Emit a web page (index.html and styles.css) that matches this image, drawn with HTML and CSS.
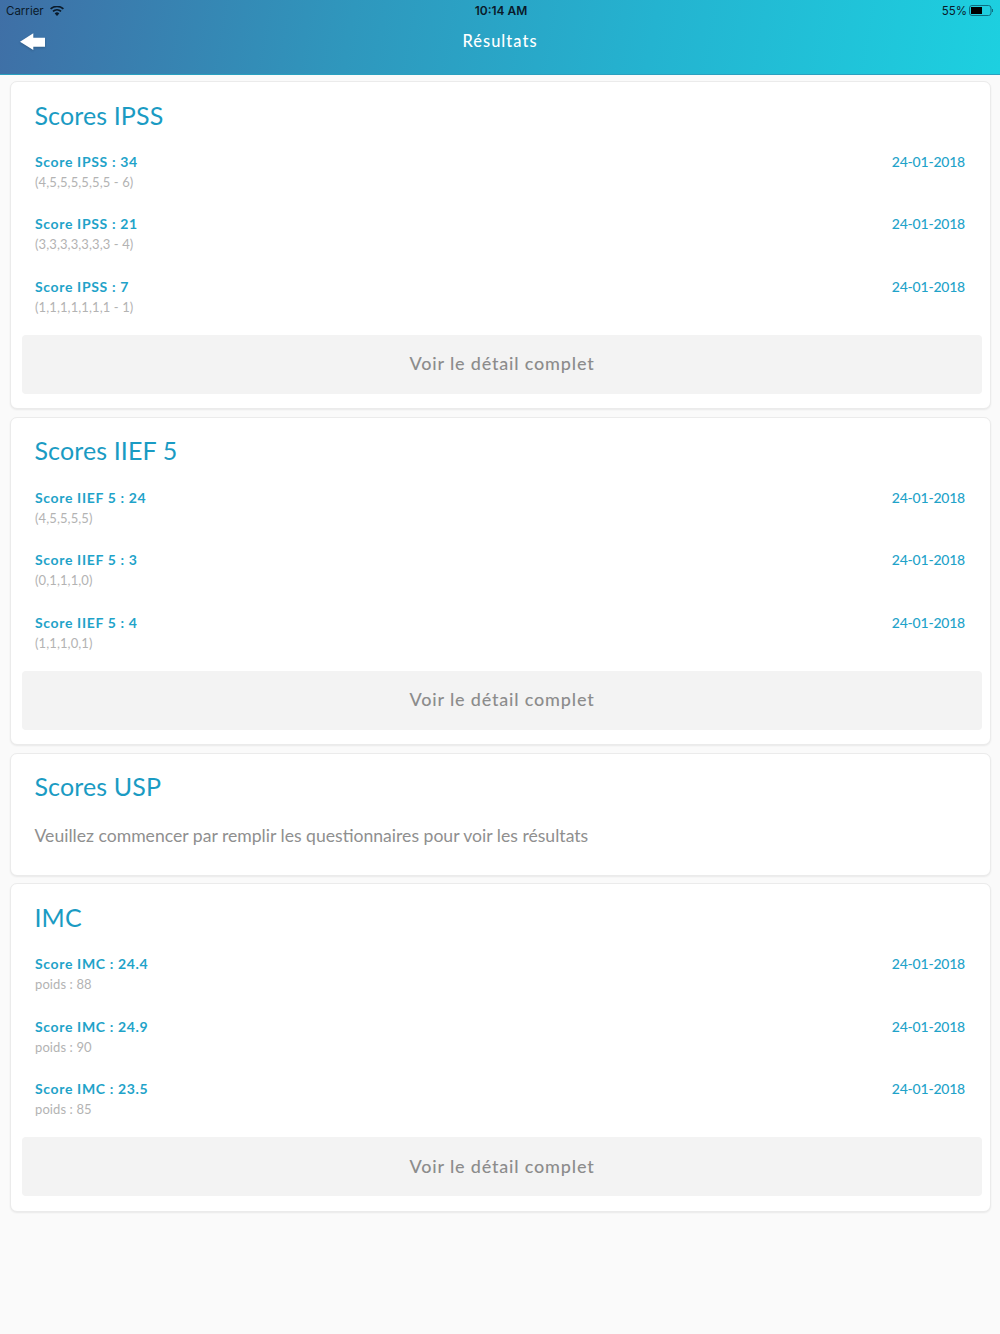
FILE: index.html
```html
<!DOCTYPE html>
<html lang="fr">
<head>
<meta charset="utf-8">
<title>Résultats</title>
<link rel="stylesheet" href="styles.css">
</head>
<body>
<header class="header">
  <div class="status">
    <div class="status-left"><span>Carrier</span>
      <svg class="wifi" width="14" height="10" viewBox="0 0 14 10"><path d="M7 10 4.7 7.4a3.4 3.4 0 0 1 4.6 0z" fill="#0a1a2a"/><path d="M3.5 6.1a5.2 5.2 0 0 1 7 0l1.1-1.3a6.9 6.9 0 0 0-9.2 0z" fill="#0a1a2a"/><path d="M1.2 3.6a8.6 8.6 0 0 1 11.6 0L14 2.3a10.3 10.3 0 0 0-14 0z" fill="#0a1a2a"/></svg>
    </div>
    <div class="status-time">10:14 AM</div>
    <div class="status-right"><span>55%</span>
      <svg class="battery" width="25" height="11" viewBox="0 0 25 11"><rect x="0.5" y="0.5" width="21.5" height="10" rx="2.5" fill="none" stroke="#0f6d80"/><rect x="2" y="2" width="11" height="7" fill="#000"/><path d="M23 4h1v3h-1z" fill="#0f6d80"/></svg>
    </div>
  </div>
  <div class="nav">
    <svg class="back" width="27" height="19" viewBox="0 0 27 19"><path d="M1 9.7 14.3 1.3v4.4H26v9H14.3V18z" fill="#fff"/></svg>
    <div class="nav-title">Résultats</div>
  </div>
</header>
<main class="content">
  <section class="card">
    <h2 class="card-title">Scores IPSS</h2>
    <div class="rows">
      <div class="row"><div><div class="score">Score IPSS : 34</div><div class="detail">(4,5,5,5,5,5,5 - 6)</div></div><div class="date">24-01-2018</div></div>
      <div class="row"><div><div class="score">Score IPSS : 21</div><div class="detail">(3,3,3,3,3,3,3 - 4)</div></div><div class="date">24-01-2018</div></div>
      <div class="row"><div><div class="score">Score IPSS : 7</div><div class="detail">(1,1,1,1,1,1,1 - 1)</div></div><div class="date">24-01-2018</div></div>
    </div>
    <div class="more">Voir le détail complet</div>
  </section>
  <section class="card">
    <h2 class="card-title">Scores IIEF 5</h2>
    <div class="rows">
      <div class="row"><div><div class="score">Score IIEF 5 : 24</div><div class="detail">(4,5,5,5,5)</div></div><div class="date">24-01-2018</div></div>
      <div class="row"><div><div class="score">Score IIEF 5 : 3</div><div class="detail">(0,1,1,1,0)</div></div><div class="date">24-01-2018</div></div>
      <div class="row"><div><div class="score">Score IIEF 5 : 4</div><div class="detail">(1,1,1,0,1)</div></div><div class="date">24-01-2018</div></div>
    </div>
    <div class="more">Voir le détail complet</div>
  </section>
  <section class="card card-empty">
    <h2 class="card-title">Scores USP</h2>
    <p class="empty">Veuillez commencer par remplir les questionnaires pour voir les résultats</p>
  </section>
  <section class="card">
    <h2 class="card-title">IMC</h2>
    <div class="rows">
      <div class="row"><div><div class="score">Score IMC : 24.4</div><div class="detail">poids : 88</div></div><div class="date">24-01-2018</div></div>
      <div class="row"><div><div class="score">Score IMC : 24.9</div><div class="detail">poids : 90</div></div><div class="date">24-01-2018</div></div>
      <div class="row"><div><div class="score">Score IMC : 23.5</div><div class="detail">poids : 85</div></div><div class="date">24-01-2018</div></div>
    </div>
    <div class="more">Voir le détail complet</div>
  </section>
</main>
</body>
</html>
```
FILE: styles.css
```css
* { box-sizing: border-box; }
html, body { margin: 0; padding: 0; }
body {
  height: 1334px;
  overflow: hidden;
  background: #fafafa;
  font-family: Lato, "Open Sans", sans-serif;
}
.header {
  height: 75px;
  background: linear-gradient(100deg, #3f6fa6 0%, #2f97bd 35%, #24b3d0 65%, #1dd0e0 100%);
  border-bottom: 1px solid #2aa0bf;
}
.status {
  height: 21px;
  padding: 0 6px;
  display: grid;
  grid-template-columns: 1fr auto 1fr;
  align-items: center;
  font-family: Inter, "Liberation Sans", sans-serif;
  font-size: 11.5px;
  color: #0a1a2a;
}
.status-left { display: flex; align-items: center; gap: 6px; }
.status-time { font-size: 12px; font-weight: 600; margin-left: 2px; }
.status-right { display: flex; align-items: center; justify-content: flex-end; gap: 2px; }
.nav {
  height: 42px;
  margin-top: -2px;
  display: flex;
  align-items: center;
  justify-content: center;
  position: relative;
}
.back { position: absolute; left: 19px; top: 13px; filter: drop-shadow(0 1px 1px rgba(0,0,0,.2)); }
.nav-title { color: #fff; font-size: 16.4px; font-weight: 500; letter-spacing: 1.05px; }
.content {
  padding: 6px 9.5px 0;
  display: flex;
  flex-direction: column;
  gap: 8px;
}
.card {
  background: #fff;
  border: 1px solid #ebebeb;
  border-radius: 7px;
  box-shadow: 0 1px 2px rgba(0,0,0,.07);
  padding: 0 7.5px 0 11.5px;
  height: 327.8px;
}
.card:last-child { height: 328.8px; }
.card-empty { height: 123.2px; margin-bottom: -.5px; }
.card-title {
  margin: 0;
  padding: 17.6px 0 0 12.5px;
  height: 61px;
  font-size: 25px;
  line-height: 30px;
  font-weight: 400;
  color: #1a9bc3;
  letter-spacing: .12px;
}
.rows { padding: 8.9px 17px 0 13px; }
.row { height: 62.5px; display: flex; justify-content: space-between; align-items: flex-start; }
.row:last-child { height: 58.1px; }
.score { font-size: 14px; line-height: 20px; font-weight: 700; color: #1fa3c9; letter-spacing: .65px; }
.detail { font-size: 13px; line-height: 20px; color: #b3b3b3; letter-spacing: .1px; }
.date { font-size: 14px; line-height: 20px; color: #1fa3c9; font-weight: 500; letter-spacing: -.22px; }
.more {
  height: 59px;
  padding-bottom: 2px;
  background: #f3f3f3;
  border-radius: 4px;
  display: flex;
  align-items: center;
  justify-content: center;
  font-size: 18px;
  font-weight: 500;
  color: #8c8c8c;
  letter-spacing: .82px;
}
.empty { margin: 9.4px 0 0 12.5px; font-size: 17.6px; line-height: 24px; color: #8f8f8f; }
```
